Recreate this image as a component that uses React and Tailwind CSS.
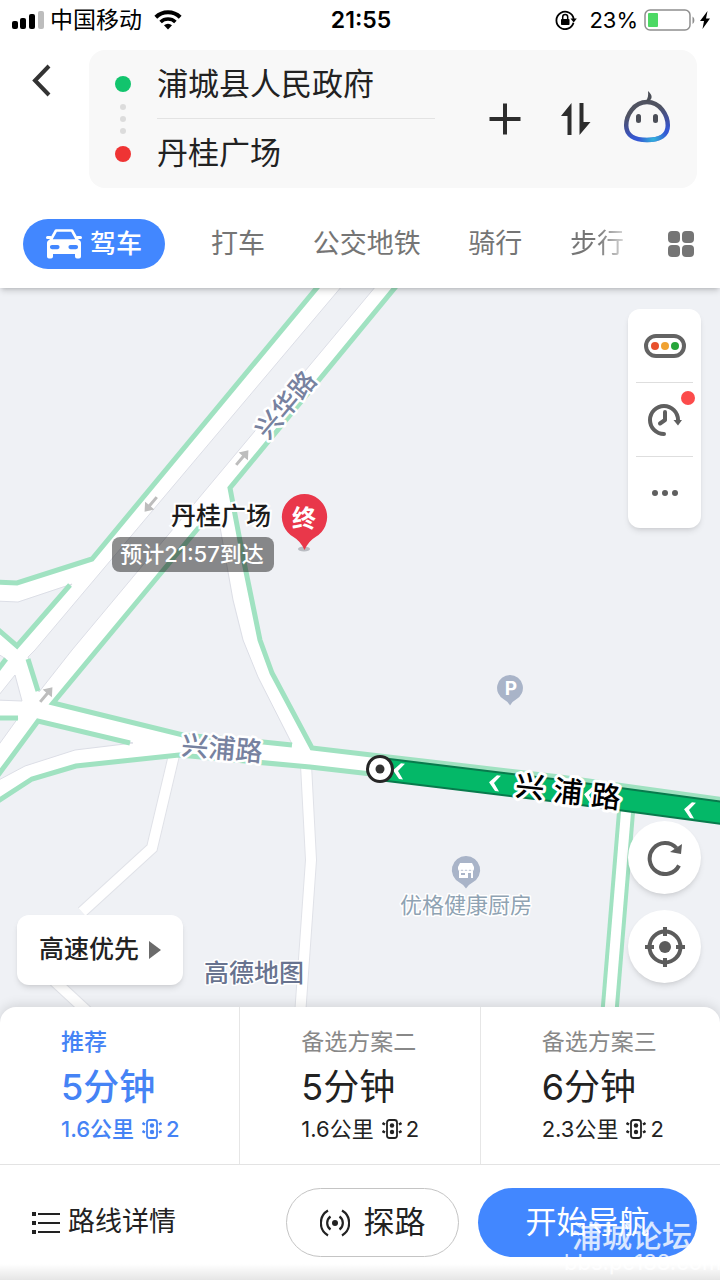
const MODES = ["打车", "公交地铁", "骑行", "步行"];

const ROUTES = [
  { id: 1, label: "推荐", time: "5分钟", distance: "1.6公里", lights: 2 },
  { id: 2, label: "备选方案二", time: "5分钟", distance: "1.6公里", lights: 2 },
  { id: 3, label: "备选方案三", time: "6分钟", distance: "2.3公里", lights: 2 },
];

const ACTIVE_ROUTE = 1;

function StatusBar() {
  return (
    <div className="flex h-10 items-center justify-between pr-2.5 pl-3 text-[22px] leading-10 text-black">
      <div className="flex flex-1 items-center">
        <svg width="32" height="20" viewBox="0 0 32 20" className="mr-1.5">
          <rect x="0" y="11" width="6" height="8" rx="2" />
          <rect x="8" y="8" width="6" height="11" rx="2" />
          <rect x="17" y="4" width="6" height="15" rx="2" />
          <rect x="26" y="1" width="6" height="18" rx="2" fill="#bdbdbd" />
        </svg>
        <span className="text-[23px]">中国移动</span>
        <svg width="28" height="20" viewBox="0 0 28 20" className="ml-3" fill="none" stroke="#000" strokeWidth="4">
          <path d="M1.8 7.2a17.5 17.5 0 0 1 24.4 0" />
          <path d="M6.6 12a10.7 10.7 0 0 1 14.8 0" strokeWidth="3.6" />
          <path d="M14 19.5l-4-4.2a6 6 0 0 1 8 0z" fill="#000" stroke="none" />
        </svg>
      </div>
      <span className="text-[23px] font-semibold">21:55</span>
      <div className="flex flex-1 items-center justify-end">
        <svg width="22" height="20" viewBox="0 0 22 20" className="mr-3">
          <path d="M18.5 12.8A8.7 8.7 0 1 1 18.7 9" fill="none" stroke="#000" strokeWidth="1.8" />
          <path d="M15.5 8.5h6.3l-3.1 4z" />
          <rect x="6" y="9" width="8.5" height="6" rx="0.8" />
          <path d="M7.7 9V7a2.5 2.5 0 0 1 5 0v2" fill="none" stroke="#000" strokeWidth="1.5" />
        </svg>
        <span>23%</span>
        <svg width="52" height="24" viewBox="0 0 52 24" className="ml-1.5">
          <rect x="1" y="2" width="45" height="20" rx="5" fill="#fff" stroke="#8f8f8f" strokeWidth="1.5" />
          <rect x="4" y="5" width="10" height="14" rx="1" fill="#4cd964" />
          <path d="M48.5 8.5c2.5 1.5 2.5 6 0 7.5z" fill="#8f8f8f" />
        </svg>
        <svg width="10" height="18" viewBox="0 0 10 18" className="ml-1">
          <path d="M7.5 0L0 10h4L2.5 18 10 7.500H6z" />
        </svg>
      </div>
    </div>
  );
}

function AssistantIcon() {
  const face = "M24 11C11 11 3.2 24 3.2 34.5 3.2 44 11 49 24 49s20.800-5 20.800-14.500C44.8 24 37 11 24 11z";

  return (
    <svg width="48" height="56" viewBox="0 0 48 56" fill="none" strokeWidth="4.500">
      <defs>
        <linearGradient id="face" x1="0.3" y1="0" x2="0.6" y2="1">
          <stop offset="0.25" stopColor="#505361" />
          <stop offset="0.6" stopColor="#4150a0" />
          <stop offset="0.85" stopColor="#3558d4" />
        </linearGradient>
        <radialGradient id="glow" cx="0.65" cy="0.98" r="0.35">
          <stop offset="0" stopColor="#32b4dc" />
          <stop offset="1" stopColor="#32b4dc" stopOpacity="0" />
        </radialGradient>
      </defs>
      <path d={face} stroke="url(#face)" />
      <path d={face} stroke="url(#glow)" />
      <path d="M25 0c4.5 4 5 7.500.5 10.500h-3C25 7.500 25.500 4 25 0z" fill="#4b4e57" />
      <rect x="13" y="23" width="5" height="9" rx="2.5" fill="#4b4e57" />
      <rect x="30" y="23" width="5" height="9" rx="2.5" fill="#4b4e57" />
    </svg>
  );
}

function SearchPanel() {
  return (
    <div className="flex items-start pt-2.5 pr-[23px] pl-7">
      <button type="button" aria-label="返回" className="mt-3 flex h-9 w-7 items-center">
        <svg width="26" height="34" viewBox="0 0 26 34" fill="none" stroke="#333" strokeWidth="4">
          <path d="M21 3L7 17.5 21 32" />
        </svg>
      </button>

      <div className="ml-[33px] flex h-[138px] flex-1 items-center rounded-2xl bg-[#f8f8f8] pr-[26px] pl-6">
        <div className="flex w-5 flex-col items-center gap-1.5">
          <span className="mb-1.5 size-4 rounded-full bg-[#12c46d]" />
          <span className="size-1.5 rounded-full bg-[#dcdcdc]" />
          <span className="size-1.5 rounded-full bg-[#dcdcdc]" />
          <span className="size-1.5 rounded-full bg-[#dcdcdc]" />
          <span className="mt-1.5 size-4 rounded-full bg-[#ef3434]" />
        </div>

        <div className="ml-6 w-[278px] text-[31px] text-[#222]">
          <input
            aria-label="起点"
            defaultValue="浦城县人民政府"
            className="block h-[68px] w-full border-b border-[#e3e3e3] bg-transparent pb-1.5 outline-none"
          />
          <input
            aria-label="终点"
            defaultValue="丹桂广场"
            className="block h-[68px] w-full bg-transparent pb-1.5 outline-none"
          />
        </div>

        <div className="flex flex-1 items-center justify-end">
          <button type="button" aria-label="添加途经点">
            <svg width="32" height="32" viewBox="0 0 32 32" stroke="#2d2d2d" strokeWidth="4">
              <path d="M0.5 16h31M16 0.5v31" />
            </svg>
          </button>
          <button type="button" aria-label="交换起终点" className="ml-10">
            <svg width="30" height="32" viewBox="0 0 30 32" fill="#2d2d2d">
              <path d="M10.500 0v32H6.500V13H0z" />
              <path d="M18.500 32V0h4v19H29.500z" />
            </svg>
          </button>
          <button type="button" aria-label="语音助手" className="ml-8">
            <AssistantIcon />
          </button>
        </div>
      </div>
    </div>
  );
}

function CarIcon() {
  return (
    <svg width="36" height="30" viewBox="0 0 36 30" fill="#fff">
      <path d="M10 1.5h16l5.500 10h-27z" fill="none" stroke="#fff" strokeWidth="2.6" strokeLinejoin="round" />
      <rect x="0" y="7" width="6" height="3" rx="1.5" />
      <rect x="30" y="7" width="6" height="3" rx="1.5" />
      <path
        fillRule="evenodd"
        d="M3.5 11h29c1.5 0 2.5 1.5 2.5 3v13.500a2 2 0 0 1-2 2h-2a2 2 0 0 1-2-2V25H7v2.500a2 2 0 0 1-2 2H3a2 2 0 0 1-2-2V14c0-1.500 1-3 2.500-3zM6 16a2 2 0 0 0 0 4.200h5.500a2 2 0 0 0 0-4.200zm18.500 0a2 2 0 0 0 0 4.200H30a2 2 0 0 0 0-4.200z"
      />
    </svg>
  );
}

function ModeTabs() {
  return (
    <nav className="flex items-center pt-[31px] pr-[26px] pb-[19px] pl-[23px] text-[27px] leading-[50px] text-[#757575]">
      <button
        type="button"
        className="flex h-[50px] w-[142px] items-center justify-center gap-2 rounded-full bg-[#4287ff] text-[26px] font-medium text-white"
      >
        <CarIcon />
        驾车
      </button>
      <div className="flex flex-1 justify-between pl-[46px]">
        {MODES.map((mode) => (
          <button
            key={mode}
            type="button"
            className={
              mode === "步行"
                ? "bg-linear-to-r from-[#757575] from-50% to-[#d8d8d8] bg-clip-text text-transparent"
                : ""
            }
          >
            {mode}
          </button>
        ))}
      </div>
      <button type="button" aria-label="更多出行方式" className="ml-11 grid grid-cols-2 gap-0.5">
        <span className="size-3 rounded-sm bg-[#757575]" />
        <span className="size-3 rounded-sm bg-[#757575]" />
        <span className="size-3 rounded-sm bg-[#757575]" />
        <span className="size-3 rounded-sm bg-[#757575]" />
      </button>
    </nav>
  );
}

function RoadArrow({ x, y, angle }) {
  return (
    <path
      d="M-9 -1.5H2V-6L10 0L2 6V1.500H-9z"
      fill="#bdbdbd"
      transform={`translate(${x} ${y}) rotate(${angle})`}
    />
  );
}

function RouteChevron({ x, y }) {
  return (
    <path
      d="M5 -8H1L-6 0L1 8H5L-1 0z"
      fill="#fff"
      transform={`translate(${x} ${y}) rotate(7)`}
    />
  );
}

function MapCanvas() {
  return (
    <svg
      viewBox="0 288 720 736"
      preserveAspectRatio="xMidYMin slice"
      className="absolute inset-0 size-full"
      fill="none"
    >
      <rect x="-400" y="0" width="1600" height="1400" fill="#eff1f5" />

      {/* minor roads */}
      <g stroke="#e0e2e8" strokeWidth="12">
        <path d="M174 755L152 848L82 912" />
        <path d="M306 765L311 860L299 1030" />
        <path d="M50 977L90 1014" />
      </g>
      <g stroke="#fff" strokeWidth="10">
        <path d="M174 755L152 848L82 912" />
        <path d="M306 765L311 860L299 1030" />
        <path d="M50 977L90 1014" />
      </g>

      {/* main road surface, then the land between the roads on top of it */}
      <path
        d="M318 286L92 559L17 583L-5 582V803L32 779L76 766L179 756L310 768L380 776V757L312 748L272 673L260 640L244 562L230 488L398 286z"
        fill="#fff"
      />
      <g fill="#eff1f5" stroke="#dcdee6" strokeWidth="1">
        <path d="M342 286L35 650L28 657L39 692L72 650L376 286z" />
        <path d="M-5 601L18 602L72 584L17 647L-5 628z" />
        <path d="M-5 652L6 659L-5 673z" />
        <path d="M-5 700L15 675L22 701z" />
        <path d="M-5 718H18L-5 750z" />
        <path d="M38 720L133 743L75 750L25 766L-5 782z" />
        <path d="M216 503L220 527L233 600L243 640L258 677L292 744L263 742L183 736L53 704L200 526z" />
      </g>

      {/* green verges */}
      <g stroke="#a0e2c1" strokeWidth="5">
        <path d="M320 284L92 559L17 583L-5 582" />
        <path d="M70 585L17 646L-5 627" />
        <path d="M-4 672L6 659" />
        <path d="M398 284L230 488L244 562L260 640L272 673L312 748L380 756L560 777L725 800" />
        <path d="M200 526L53 703L183 735L263 742L292 745" />
        <path d="M28 659L38 691" />
        <path d="M-5 718H18" />
        <path d="M-4 778L38 721L130 743" />
        <path d="M-5 803L32 779L76 766L179 755L310 767L380 775" />
      </g>

      <path d="M627 800L608 1030" stroke="#a0e2c1" strokeWidth="18" />
      <path d="M627 800L608 1030" stroke="#fff" strokeWidth="10" />

      <RoadArrow x={242} y={458} angle={-50} />
      <RoadArrow x={151} y={504} angle={130} />
      <RoadArrow x={46} y={695} angle={-50} />

      {/* planned route */}
      <path d="M380 769L560 791L730 814" stroke="#087a4c" strokeWidth="24" />
      <path d="M380 769L560 791L730 814" stroke="#04b868" strokeWidth="20" />
      <RouteChevron x={399} y={771} />
      <RouteChevron x={495} y={783} />
      <RouteChevron x={590} y={795} />
      <RouteChevron x={690} y={810} />
      <circle cx="380" cy="769" r="12.5" fill="#fff" stroke="#262626" strokeWidth="3" />
      <circle cx="380" cy="769" r="4.5" fill="#333" />

      {/* road names */}
      <g strokeLinejoin="round" paintOrder="stroke" textAnchor="middle" stroke="#fff">
        <text x="0" y="9" transform="translate(286 405) rotate(-50)" fontSize="26" fill="#7782a0" strokeWidth="5" fontWeight="500">
          兴华路
        </text>
        <text x="0" y="9" transform="translate(222 749) rotate(5)" fontSize="27" fill="#7782a0" strokeWidth="5" fontWeight="500">
          兴浦路
        </text>
        <g fontSize="29" fill="#000" strokeWidth="6" fontWeight="500">
          <text x="0" y="10" transform="translate(530 787) rotate(6)">兴</text>
          <text x="0" y="10" transform="translate(568 792) rotate(6)">浦</text>
          <text x="0" y="10" transform="translate(606 797) rotate(6)">路</text>
        </g>
        <text x="466" y="913" fontSize="22" fill="#8fa3b3" strokeWidth="3">
          优格健康厨房
        </text>
        <text x="254" y="982" fontSize="25" fill="#68738f" strokeWidth="3" fontWeight="500">
          高德地图
        </text>
      </g>

      {/* car park */}
      <path d="M510 675a13 13 0 0 1 6 24.500q-4 2-6 6q-2-4-6-6A13 13 0 0 1 510 675z" fill="#a9b4c8" />
      <text x="511" y="695" fontSize="19" fontWeight="700" textAnchor="middle" fill="#fff">
        P
      </text>

      {/* shop */}
      <path d="M466 856a14 14 0 0 1 6.500 26.500q-4 2-6.500 6q-2.500-4-6.500-6A14 14 0 0 1 466 856z" fill="#a9b4c8" />
      <path d="M460 863h12l2 4v2a2 2 0 0 1-4 0a2 2 0 0 1-4 0a2 2 0 0 1-4 0a2 2 0 0 1-4 0v-2z" fill="#fff" />
      <path fillRule="evenodd" d="M459 871h14v7h-14zM461 873h4v2h-4zM468 873h3v5h-3z" fill="#fff" />

      {/* destination */}
      <g textAnchor="middle">
        <text x="221" y="525" fontSize="25" fontWeight="500" fill="#1c1c1c" stroke="#fff" strokeWidth="4" paintOrder="stroke">
          丹桂广场
        </text>
        <rect x="112" y="537" width="162" height="35" rx="8" fill="#000" fillOpacity="0.44" />
        <text x="192" y="562" fontSize="22" fontWeight="500" fill="#fff">
          预计21:57到达
        </text>
        <ellipse cx="304" cy="549" rx="6" ry="2.5" fill="#b9bcc2" />
        <path d="M304.500 494a23 23 0 0 1 11 43q-7 4-11 13q-4-9-11-13a23 23 0 0 1 11-43z" fill="#e9374a" />
        <text x="304" y="527" fontSize="24" fontWeight="700" fill="#fff">
          终
        </text>
      </g>
    </svg>
  );
}

function MapTools() {
  return (
    <div className="absolute top-[21px] right-[19px] flex w-[73px] flex-col items-center rounded-xl bg-white px-2 shadow-md shadow-black/10">
      <button type="button" aria-label="路况" className="flex h-[73px] w-full items-center justify-center">
        <svg width="42" height="24" viewBox="0 0 42 24">
          <rect x="2" y="2" width="38" height="20" rx="10" fill="#fff" stroke="#636363" strokeWidth="4" />
          <circle cx="11" cy="12" r="4" fill="#e8502c" />
          <circle cx="21" cy="12" r="4" fill="#f0a232" />
          <circle cx="31" cy="12" r="4" fill="#27a53a" />
        </svg>
      </button>
      <button
        type="button"
        aria-label="未来用时"
        className="relative flex h-[75px] w-full items-center justify-center border-y border-[#dedede]"
      >
        <svg width="34" height="34" viewBox="0 0 34 34" fill="none" stroke="#5f5f5f" strokeWidth="4">
          <path d="M16 31A14 14 0 1 1 30 17v1" strokeLinecap="round" />
          <path d="M17 9v8l-5 3.500" strokeLinecap="round" strokeLinejoin="round" />
          <path d="M25.500 17h8.500l-4 5.500z" fill="#5f5f5f" stroke="none" />
        </svg>
        <span className="absolute top-2 -right-0.5 size-3.5 rounded-full bg-[#fc4b4b]" />
      </button>
      <button type="button" aria-label="更多" className="flex h-[71px] w-full items-center justify-center gap-1">
        <span className="size-1.5 rounded-full bg-[#5f5f5f]" />
        <span className="size-1.5 rounded-full bg-[#5f5f5f]" />
        <span className="size-1.5 rounded-full bg-[#5f5f5f]" />
      </button>
    </div>
  );
}

function MapButtons() {
  return (
    <div className="absolute right-[19px] bottom-10 flex flex-col gap-4">
      <button
        type="button"
        aria-label="刷新路线"
        className="flex size-[73px] items-center justify-center rounded-full bg-white shadow-md shadow-black/10"
      >
        <svg width="36" height="36" viewBox="0 0 36 36" fill="none" stroke="#5c5c5c" strokeWidth="4">
          <path d="M32 25.500A15.500 15.500 0 1 1 29.500 8" />
          <path d="M35 4l-1 10-11-2z" fill="#5c5c5c" stroke="none" />
        </svg>
      </button>
      <button
        type="button"
        aria-label="定位"
        className="flex size-[73px] items-center justify-center rounded-full bg-white shadow-md shadow-black/10"
      >
        <svg width="40" height="40" viewBox="0 0 40 40" fill="none" stroke="#5c5c5c" strokeWidth="4">
          <circle cx="20" cy="20" r="15.5" />
          <circle cx="20" cy="20" r="6" fill="#5c5c5c" stroke="none" />
          <path d="M20 0v9M20 31v9M0 20h9M31 20h9" />
        </svg>
      </button>
    </div>
  );
}

function TrafficLightIcon() {
  return (
    <svg width="20" height="20" viewBox="0 0 20 20" fill="none" stroke="currentColor">
      <rect x="5" y="1" width="10" height="18" rx="2.5" strokeWidth="1.8" />
      <circle cx="10" cy="6.500" r="2.2" fill="currentColor" stroke="none" />
      <circle cx="10" cy="13" r="2.2" fill="currentColor" stroke="none" />
      <path d="M0.5 4l2.500 1.500M0.500 12l2.500 1.500M19.500 4L17 5.500M19.500 12L17 13.500" strokeWidth="2.5" />
    </svg>
  );
}

function RouteCard({ route, active }) {
  return (
    <button
      type="button"
      className={`flex h-[157px] flex-1 flex-col items-start border-r border-[#e6e6e6] pt-4 pl-[61px] last:border-r-0 ${
        active ? "text-[#4583f5]" : "text-[#222]"
      }`}
    >
      <span
        className={`text-[23px] leading-[38px] ${active ? "font-medium" : "text-[#888]"}`}
      >
        {route.label}
      </span>
      <span className={`text-[36px] leading-[52px] ${active ? "font-medium" : ""}`}>
        {route.time}
      </span>
      <span className={`flex items-center text-[22px] leading-8 ${active ? "font-medium" : ""}`}>
        {route.distance}
        <span className="ml-2">
          <TrafficLightIcon />
        </span>
        <span className="ml-1">{route.lights}</span>
      </span>
    </button>
  );
}

function ActionBar() {
  return (
    <div className="flex h-[116px] items-center border-t border-[#e3e3e3] pr-[23px] pl-8">
      <button type="button" className="flex items-center gap-2 text-[27px] text-[#222]">
        <svg width="28" height="22" viewBox="0 0 28 22" fill="#222">
          <path d="M0 0h4v4H0zM0 9h4v4H0zM0 18h4v4H0zM6 1h22v2H6zM6 10h22v2H6zM6 19h22v2H6z" />
        </svg>
        路线详情
      </button>
      <div className="ml-auto flex items-center gap-[19px]">
        <button
          type="button"
          className="flex h-[69px] w-[173px] items-center justify-center gap-3.5 rounded-full border border-[#c4c4c4] text-[31px] text-[#222]"
        >
          <svg width="30" height="28" viewBox="0 0 30 28" fill="none" stroke="#222" strokeWidth="2.2">
            <circle cx="15" cy="14" r="3" fill="#222" stroke="none" />
            <path d="M10.500 7.500a8 8 0 0 0 0 13M19.500 7.500a8 8 0 0 1 0 13M8 1.500a14.500 14.500 0 0 0 0 25M22 1.500a14.500 14.500 0 0 1 0 25" />
          </svg>
          探路
        </button>
        <button
          type="button"
          className="h-[69px] w-[219px] rounded-full bg-[#4287ff] text-[31px] text-white"
        >
          开始导航
        </button>
      </div>
    </div>
  );
}

function Watermark() {
  return (
    <div className="pointer-events-none absolute right-0 bottom-0 h-[60px] w-40 overflow-hidden pl-1 text-white/80">
      <div className="pl-2 text-[30px] leading-8 font-medium">浦城论坛</div>
      <div className="text-[22px] leading-5">bbs.pc188.com</div>
    </div>
  );
}

export default function App() {
  return (
    <div className="relative flex min-h-screen flex-col bg-white font-[Inter,'Noto_Sans_CJK_SC',sans-serif]">
      <header className="relative z-10 bg-white shadow-md shadow-black/15">
        <StatusBar />
        <SearchPanel />
        <ModeTabs />
      </header>

      <main className="relative flex-1 overflow-hidden">
        <MapCanvas />
        <MapTools />
        <button
          type="button"
          className="absolute bottom-[38px] left-[17px] flex h-[70px] w-[166px] items-center justify-center gap-2.5 rounded-xl bg-white text-[25px] font-medium text-[#222] shadow-md shadow-black/10"
        >
          高速优先
          <svg width="12" height="18" viewBox="0 0 12 18" fill="#6b6b6b">
            <path d="M0 0l12 9-12 9z" />
          </svg>
        </button>
        <MapButtons />
      </main>

      <section className="relative -mt-4 rounded-t-2xl bg-white shadow-[0_-2px_12px_rgba(0,0,0,0.12)]">
        <div className="flex">
          {ROUTES.map((route) => (
            <RouteCard key={route.id} route={route} active={route.id === ACTIVE_ROUTE} />
          ))}
        </div>
        <ActionBar />
        <div className="absolute inset-x-0 bottom-0 h-4 bg-linear-to-t from-black/10 to-transparent" />
        <Watermark />
      </section>
    </div>
  );
}
